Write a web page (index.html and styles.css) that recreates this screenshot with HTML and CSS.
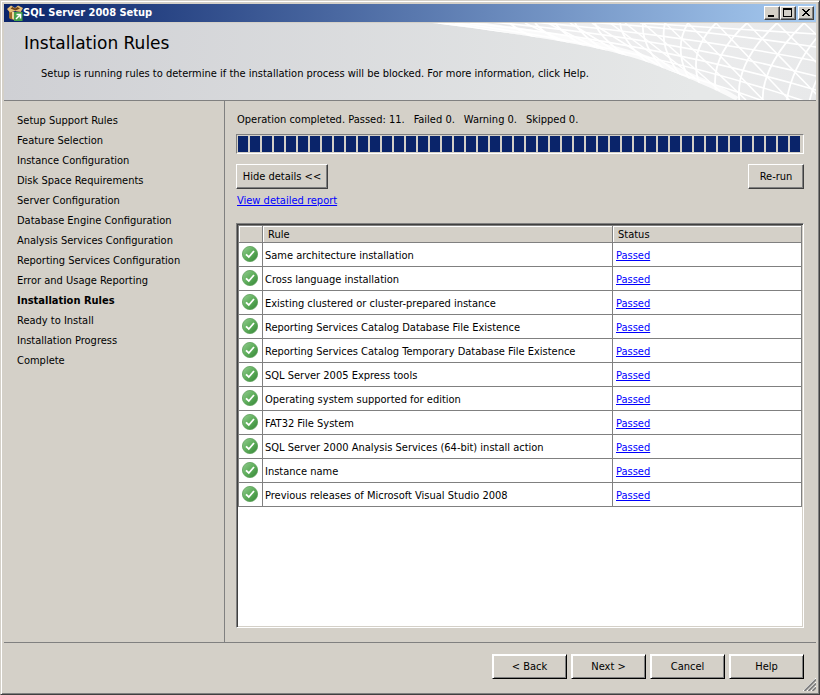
FILE: index.html
```html
<!DOCTYPE html>
<html lang="en">
<head>
  <meta charset="UTF-8">
  <meta name="viewport" content="width=device-width, initial-scale=1.0">
  <title>SQL Server 2008 Setup</title>
  <link rel="stylesheet" href="styles.css">
</head>
<body>
  <div class="window">
    <div class="title-bar">
      <svg class="app-icon" width="16" height="16" viewBox="0 0 16 16">
        <path d="M2 6l6 1 6-1v7l-6 2.500L2 13z" fill="#c98f40"/>
        <path d="M2 6l3 1v7.500L2 13z" fill="#9c6a28"/>
        <path d="M0 4l4-3.500L8 3l3-2.500L16 3l-2 3.500L8 6 3 7.500z" fill="#e6bd78"/>
        <path d="M3.500 3.500L5.500 2 8 3.500 10.500 2l2.500 1.500L8.500 5.500z" fill="#6f4415"/>
        <path d="M5 7h2.500v7.500L5 13.500z" fill="#f0d69c"/>
        <path d="M7 7h8.500v9H7z" fill="#46a04b"/>
        <path d="M9 14l4.500-4.500M9.500 9.500H13.500V13.500" fill="none" stroke="#fff" stroke-width="1.500"/>
      </svg>
      <span class="title">SQL Server 2008 Setup</span>
      <div class="window-buttons">
        <button aria-label="Minimize"><svg width="12" height="10" viewBox="0 0 12 10"><path d="M2 7h6v2H2z"/></svg></button>
        <button aria-label="Maximize"><svg width="12" height="10" viewBox="0 0 12 10"><path d="M1 0h9v9H1zM2 2v6h7V2z" fill-rule="evenodd"/></svg></button>
        <button class="close" aria-label="Close"><svg width="12" height="10" viewBox="0 0 12 10"><path d="M2 1h2v1h1v1h2V2h1V1h2v1H9v1H8v1H7v1h1v1h1v1h1v1H8V7H7V6H5v1H4v1H2V7h1V6h1V5h1V4H4V3H3V2H2z"/></svg></button>
      </div>
    </div>

    <header class="banner">
      <svg class="mesh" viewBox="0 0 396 77" width="396" height="77">
        <defs>
          <linearGradient id="meshFill" x1="0" x2="1" y1="0" y2="0">
            <stop offset="0" stop-color="#e2e3e5"/>
            <stop offset=".4" stop-color="#eeeeef"/>
            <stop offset="1" stop-color="#e8e9ea"/>
          </linearGradient>
          <clipPath id="meshClip">
            <path d="M12 0C110 12 190 24 235 42C275 57 300 69 315 77H396V0z"/>
          </clipPath>
        </defs>
        <g clip-path="url(#meshClip)" fill="none" stroke="#fff">
          <path d="M0 0h396v77H0z" fill="url(#meshFill)" stroke="none"/>
          <!-- lines running across -->
          <path stroke-width="1.600" d="M220 0L396 11M150-2Q270 5 396 24M100-2Q250 10 396 38M70-1Q240 14 396 53M50 0Q235 20 396 67M35 0Q230 25 396 82M25 0Q230 31 396 98M18 0Q230 37 396 112"/>
          <!-- arcs bending towards the lower right -->
          <path stroke-width="1.800" d="M90 0Q100 10 130 20M115 0Q125 12 155 26M135 0Q145 14 180 32M155 0Q163 16 202 38M175 0Q180 18 225 45M200 0Q202 22 243 52M223 0Q220 27 258 60M245 0Q237 32 275 68M268 0Q247 35 286 80M296 0Q258 38 292 84M327 0Q280 42 302 88M357 0Q308 46 322 90M384 0Q335 48 344 90M410 0Q366 45 366 90M420 24Q390 55 388 90"/>
          <!-- diagonals closing the triangles -->
          <path stroke-width="1.500" d="M105 0L165 28M128 0L190 32M150 0L212 38M172 0L238 42M190 0L255 48M205 0L275 55M223 0L300 68M245 0L326 77M268 0L348 82M296 0L374 82M327 0L402 77M357 0L402 45M384 0L402 17"/>
          <path stroke-width="12" opacity=".75" d="M12-1C110 11 190 24 235 42C275 57 300 69 315 79"/>
        </g>
      </svg>
      <h1>Installation Rules</h1>
      <p>Setup is running rules to determine if the installation process will be blocked. For more information, click Help.</p>
    </header>

    <div class="content">
      <ul class="steps">
        <li>Setup Support Rules</li>
        <li>Feature Selection</li>
        <li>Instance Configuration</li>
        <li>Disk Space Requirements</li>
        <li>Server Configuration</li>
        <li>Database Engine Configuration</li>
        <li>Analysis Services Configuration</li>
        <li>Reporting Services Configuration</li>
        <li>Error and Usage Reporting</li>
        <li class="current">Installation Rules</li>
        <li>Ready to Install</li>
        <li>Installation Progress</li>
        <li>Complete</li>
      </ul>

      <main>
        <div class="summary" id="summary">
          <span>Operation completed. Passed: 11.</span>
          <span>Failed 0.</span>
          <span>Warning 0.</span>
          <span>Skipped 0.</span>
        </div>
        <progress value="100" max="100" aria-labelledby="summary"></progress>
        <div class="actions">
          <button class="btn details">Hide details &lt;&lt;</button>
          <button class="btn rerun">Re-run</button>
        </div>
        <a class="report" href="#">View detailed report</a>

        <div class="list">
          <table>
            <thead>
              <tr><th class="icon-col"></th><th class="rule-col">Rule</th><th>Status</th></tr>
            </thead>
            <tbody>
              <tr><td><svg class="check"><use href="#check"/></svg></td><td>Same architecture installation</td><td><a href="#">Passed</a></td></tr>
              <tr><td><svg class="check"><use href="#check"/></svg></td><td>Cross language installation</td><td><a href="#">Passed</a></td></tr>
              <tr><td><svg class="check"><use href="#check"/></svg></td><td>Existing clustered or cluster-prepared instance</td><td><a href="#">Passed</a></td></tr>
              <tr><td><svg class="check"><use href="#check"/></svg></td><td>Reporting Services Catalog Database File Existence</td><td><a href="#">Passed</a></td></tr>
              <tr><td><svg class="check"><use href="#check"/></svg></td><td>Reporting Services Catalog Temporary Database File Existence</td><td><a href="#">Passed</a></td></tr>
              <tr><td><svg class="check"><use href="#check"/></svg></td><td>SQL Server 2005 Express tools</td><td><a href="#">Passed</a></td></tr>
              <tr><td><svg class="check"><use href="#check"/></svg></td><td>Operating system supported for edition</td><td><a href="#">Passed</a></td></tr>
              <tr><td><svg class="check"><use href="#check"/></svg></td><td>FAT32 File System</td><td><a href="#">Passed</a></td></tr>
              <tr><td><svg class="check"><use href="#check"/></svg></td><td>SQL Server 2000 Analysis Services (64-bit) install action</td><td><a href="#">Passed</a></td></tr>
              <tr><td><svg class="check"><use href="#check"/></svg></td><td>Instance name</td><td><a href="#">Passed</a></td></tr>
              <tr><td><svg class="check"><use href="#check"/></svg></td><td>Previous releases of Microsoft Visual Studio 2008</td><td><a href="#">Passed</a></td></tr>
            </tbody>
          </table>
        </div>
      </main>
    </div>

    <footer>
      <button class="btn">&lt; Back</button>
      <button class="btn">Next &gt;</button>
      <button class="btn">Cancel</button>
      <button class="btn">Help</button>
      <svg class="grip" width="13" height="13" viewBox="0 0 13 13">
        <path d="M0 13L13 0M4 13L13 4M8 13L13 8" stroke="#fff"/>
        <path d="M1.500 13L13 1.500M5.500 13L13 5.500M9.500 13L13 9.500" stroke="#808080" stroke-width="1.800"/>
      </svg>
    </footer>
  </div>

  <!-- shared status icon -->
  <svg class="defs" width="0" height="0">
    <defs>
      <linearGradient id="green" x1="0" y1="0" x2="1" y2="1">
        <stop offset="0" stop-color="#93cd90"/>
        <stop offset=".5" stop-color="#5fae5c"/>
        <stop offset="1" stop-color="#338534"/>
      </linearGradient>
    </defs>
    <symbol id="check" viewBox="0 0 16 16">
      <circle cx="8" cy="8" r="7.600" fill="url(#green)" stroke="#5a9e58" stroke-width=".8"/>
      <path d="M4 8.300l2.800 2.700L12 5" fill="none" stroke="#fff" stroke-width="1.800"/>
    </symbol>
  </svg>
</body>
</html>
```
FILE: styles.css
```css
:root {
  --face: #d4d0c8;
  --shadow: #808080;
  --dark: #404040;
  --navy: #0a246a;
}
* {
  box-sizing: border-box;
}
body {
  margin: 0;
  background: var(--face);
  color: #000;
  font-family: "DejaVu Sans Condensed", "DejaVu Sans", sans-serif;
  font-size: 11px;
  line-height: 14px;
}
a {
  color: #00f;
}
button {
  padding: 0;
  background: var(--face);
  color: #000;
  font: inherit;
}
.window {
  display: flex;
  flex-direction: column;
  min-height: 100vh;
  padding: 3px 2px 2px;
  border: 1px solid;
  border-color: var(--face) var(--dark) var(--dark) var(--face);
  box-shadow: inset 1px 1px #fff, inset -1px -1px var(--shadow);
}

/* Title bar */
.title-bar {
  display: flex;
  align-items: center;
  height: 18px;
  margin: 0 1px;
  padding: 0 2px 0 3px;
  background: linear-gradient(90deg, var(--navy), #a6caf0);
}
.title {
  flex: 1;
  color: #fff;
  font-weight: bold;
}
.window-buttons {
  display: flex;
}
.window-buttons button {
  display: flex;
  width: 16px;
  height: 14px;
  padding: 1px;
  border: 1px solid;
  border-color: #fff var(--dark) var(--dark) #fff;
  box-shadow: inset -1px -1px var(--shadow);
}
.window-buttons .close {
  margin-left: 2px;
}

/* Banner */
.banner {
  position: relative;
  height: 79px;
  margin: 0 1px;
  padding: 11px 20px;
  border-top: 1px solid var(--face);
  border-bottom: 1px solid var(--shadow);
  background: linear-gradient(90deg, #cfd0d4, #e6e8e8 85%);
}
.mesh {
  position: absolute;
  top: 0;
  right: 0;
}
h1 {
  position: relative;
  margin: 0;
  font-family: "DejaVu Sans", sans-serif;
  font-size: 17px;
  font-weight: normal;
  line-height: 18px;
}
.banner p {
  position: relative;
  margin: 15px 0 0 17px;
}

/* Steps and details */
.content {
  display: flex;
  flex: 1;
  margin: 0 1px;
  border-bottom: 1px solid var(--shadow);
}
.steps {
  width: 221px;
  margin: 0;
  padding: 10px 13px;
  border-right: 1px solid var(--shadow);
  list-style: none;
  line-height: 20px;
}
.current {
  font-weight: bold;
}
main {
  display: flex;
  flex: 1;
  flex-direction: column;
  padding: 12px 12px 14px 11px;
}
.summary {
  display: flex;
  gap: 9px;
  padding-left: 1px;
}
progress {
  width: 100%;
  height: 20px;
  margin: 7px 0 10px;
  padding: 1px;
  border: 1px solid;
  border-color: var(--shadow) #fff #fff var(--shadow);
  background: var(--face);
  appearance: none;
}
progress::-webkit-progress-bar {
  background: var(--face);
}
progress::-webkit-progress-value {
  background: repeating-linear-gradient(90deg, var(--navy) 0 10px, var(--face) 10px 12px);
}
.btn {
  width: 75px;
  height: 25px;
  border: 1px solid;
  border-color: #fff #000 #000 #fff;
  box-shadow: inset 1px 1px #fff, inset -1px -1px var(--shadow);
}
.actions {
  display: flex;
  justify-content: space-between;
}
.actions .btn {
  border-color: #fff var(--dark) var(--dark) #fff;
  box-shadow: inset -1px -1px var(--shadow);
}
.actions .details {
  width: 92px;
}
.actions .rerun {
  width: 56px;
}
.report {
  align-self: flex-start;
  margin: 5px 0 15px 1px;
}
.list {
  flex: 1;
  padding: 1px;
  border: 1px solid;
  border-color: var(--shadow) #fff #fff var(--shadow);
  background: #fff;
  box-shadow: inset 1px 1px var(--dark), inset -1px -1px var(--face);
}

/* Rules table */
table {
  width: 100%;
  table-layout: fixed;
  border-spacing: 0;
  border: solid var(--shadow);
  border-width: 1px 0 0 1px;
}
th, td {
  height: 24px;
  padding: 2px 0 0 2px;
  border-right: 1px solid var(--shadow);
  border-bottom: 1px solid var(--shadow);
  text-align: left;
}
th {
  height: 17px;
  padding-left: 5px;
  background: var(--face);
  box-shadow: inset 1px 1px #fff;
  font-weight: normal;
}
td:first-child {
  padding: 3px 0 0 3px;
  vertical-align: top;
}
td:last-child {
  padding-left: 3px;
}
.icon-col {
  width: 24px;
}
.rule-col {
  width: 350px;
}
.check {
  display: block;
  width: 16px;
  height: 16px;
}

/* Footer */
footer {
  display: flex;
  position: relative;
  justify-content: flex-end;
  gap: 4px;
  padding: 11px 13px 13px;
}
.grip {
  position: absolute;
  right: 1px;
  bottom: 1px;
}
.defs {
  position: absolute;
}
```
